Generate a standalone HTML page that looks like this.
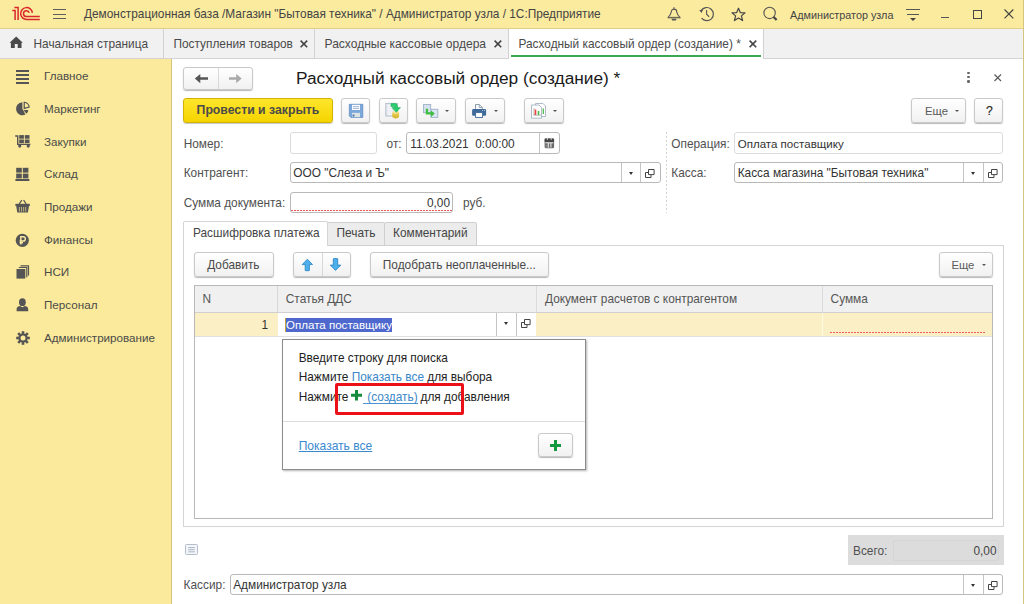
<!DOCTYPE html>
<html><head><meta charset="utf-8">
<style>
*{box-sizing:border-box;margin:0;padding:0}
html,body{width:1024px;height:604px;overflow:hidden;background:#fff;font-family:"Liberation Sans",sans-serif;font-size:11.85px;line-height:14px;color:#333}
.a{position:absolute;white-space:nowrap}
svg{position:absolute;overflow:visible}
#top{position:absolute;left:0;top:0;width:1024px;height:29px;background:#fbeb9f;border-bottom:1px solid #e0cf88}
#tabs{position:absolute;left:0;top:29px;width:1024px;height:30px;background:#f1f1f1;border-bottom:1px solid #d3d3d3}
.tdiv{position:absolute;top:0;width:1px;height:29px;background:#d2d2d2}
#side{position:absolute;left:0;top:59px;width:172px;height:545px;background:#fbea9b;border-right:1px solid #d4c37a}
.si{position:absolute;left:44px;color:#4a4a4a;font-size:11.65px}
#form{position:absolute;left:172px;top:59px;width:852px;height:545px;background:#fff}
.lbl{color:#505050}
.btn{position:absolute;border:1px solid #c9c9c9;border-radius:3px;background:linear-gradient(#fff,#f1f1f1);box-shadow:0 1px 1px rgba(0,0,0,.28)}
.inp{position:absolute;border:1px solid #b9b9b9;border-radius:3px;background:#fff}
.tri{position:absolute;width:0;height:0;border-left:2.4px solid transparent;border-right:2.4px solid transparent;border-top:2.7px solid #555}
.vl{position:absolute;width:1px;background:#c4c4c4}
.tri2{position:absolute;width:0;height:0;border-left:2.6px solid transparent;border-right:2.6px solid transparent;border-top:3px solid #333}
</style></head><body>
<div id="top">
  <svg style="left:0;top:0" width="44" height="28" viewBox="0 0 44 28">
    <path d="M12.3 10.6 H15.1 V20" fill="none" stroke="#d9262b" stroke-width="1.5"/>
    <path d="M14.4 7.6 H18.1 V20" fill="none" stroke="#d9262b" stroke-width="1.5"/>
    <path d="M39.8 19.4 H26.7 A5.9 5.9 0 1 1 32.4 12.8" fill="none" stroke="#d9262b" stroke-width="1.5"/>
    <path d="M39.8 16.5 H26.4 A2.9 2.9 0 1 1 29.2 12.9" fill="none" stroke="#d9262b" stroke-width="1.5"/>
  </svg>
  <div class="a" style="left:52.5px;top:8.7px;width:13.5px;height:1.4px;background:#5e5e5e"></div>
  <div class="a" style="left:52.5px;top:13.5px;width:13.5px;height:1.4px;background:#5e5e5e"></div>
  <div class="a" style="left:52.5px;top:18.1px;width:13.5px;height:1.4px;background:#5e5e5e"></div>
  <div class="a" style="left:84px;top:6.7px;color:#444">Демонстрационная база /Магазин "Бытовая техника" / Администратор узла / 1С:Предприятие</div>
  <!-- bell -->
  <svg style="left:0;top:0" width="1" height="1">
    <path d="M668.2 17.2 C670.2 15.4 670.9 13.5 671.3 11.8 A2.7 2.7 0 0 1 676.7 11.8 C677.1 13.5 677.8 15.4 679.8 17.2" fill="none" stroke="#555" stroke-width="1.1" stroke-linejoin="round"/>
    <path d="M667.6 17.6 H680.6" stroke="#6a6a55" stroke-width="1.5"/>
    <circle cx="674" cy="8" r="0.8" fill="#555"/>
    <path d="M672.4 19.6 H675.6" stroke="#555" stroke-width="1.6" stroke-linecap="round"/>
  </svg>
  <!-- history -->
  <svg style="left:0;top:0" width="1" height="1">
    <path d="M701.2 10.6 A6.6 6.6 0 1 1 701.6 18.2" fill="none" stroke="#555" stroke-width="1.2"/>
    <path d="M699.3 10.2 L703.2 9.2 L701.6 12.9 Z" fill="#555"/>
    <path d="M706.6 10 V14.2 L709.2 16.8" fill="none" stroke="#555" stroke-width="1.1"/>
  </svg>
  <!-- star -->
  <svg style="left:731px;top:6.5px" width="15" height="15" viewBox="0 0 15 15">
    <path d="M7.5 1.2 L9.3 5.6 L14 5.9 L10.4 8.9 L11.6 13.6 L7.5 11 L3.4 13.6 L4.6 8.9 L1 5.9 L5.7 5.6 Z" fill="none" stroke="#444" stroke-width="1.2" stroke-linejoin="round"/>
  </svg>
  <!-- search -->
  <svg style="left:0;top:0" width="1" height="1">
    <circle cx="769.6" cy="12.9" r="5.7" fill="none" stroke="#555" stroke-width="1.1"/>
    <path d="M773.6 17 L776.6 20" stroke="#444" stroke-width="2.3"/>
  </svg>
  <div class="a" style="left:790px;top:7.6px;color:#444;font-size:10.8px">Администратор узла</div>
  <!-- menu -->
  <div class="a" style="left:906px;top:9px;width:14px;height:1.3px;background:#555"></div>
  <div class="a" style="left:907px;top:14px;width:12px;height:1.3px;background:#555"></div>
  <div class="a" style="left:910px;top:18px;width:0;height:0;border-left:3px solid transparent;border-right:3px solid transparent;border-top:3px solid #444"></div>
  <div class="a" style="left:941px;top:17px;width:8px;height:1.3px;background:#555"></div>
  <div class="a" style="left:973px;top:10px;width:8.5px;height:8.5px;border:1.2px solid #444"></div>
  <svg style="left:1004px;top:9px" width="10" height="10" viewBox="0 0 10 10"><path d="M0.5 0.5 L9.3 9.3 M9.3 0.5 L0.5 9.3" stroke="#444" stroke-width="1.2"/></svg>
</div>

<div id="tabs">
  <svg style="left:0;top:-29px" width="1" height="1">
    <path d="M9.6 42.8 L16.2 36.4 L22.8 42.8 H21.5 V47.9 H17.7 V44 H14.8 V47.9 H10.9 V42.8 Z" fill="#4a4a4a"/>
  </svg>
  <div class="a" style="left:33.5px;top:8px;color:#4a4a4a">Начальная страница</div>
  <div class="tdiv" style="left:163px"></div>
  <div class="a" style="left:173.5px;top:8px;color:#4a4a4a">Поступления товаров</div>
  <svg style="left:300px;top:10.5px" width="8" height="8" viewBox="0 0 8 8"><path d="M0.6 0.6 L7.2 7.2 M7.2 0.6 L0.6 7.2" stroke="#444" stroke-width="1.6"/></svg>
  <div class="tdiv" style="left:314px"></div>
  <div class="a" style="left:324.5px;top:8px;color:#4a4a4a;font-size:12.05px">Расходные кассовые ордера</div>
  <svg style="left:494px;top:10.5px" width="8" height="8" viewBox="0 0 8 8"><path d="M0.6 0.6 L7.2 7.2 M7.2 0.6 L0.6 7.2" stroke="#444" stroke-width="1.6"/></svg>
  <div class="tdiv" style="left:508px"></div>
  <div class="a" style="left:509px;top:0;width:254px;height:30px;background:#fff"></div>
  <div class="a" style="left:511px;top:26px;width:250px;height:2px;background:#3aa757"></div>
  <div class="a" style="left:518.5px;top:8px;color:#4a4a4a">Расходный кассовый ордер (создание) *</div>
  <svg style="left:749px;top:10.5px" width="8" height="8" viewBox="0 0 8 8"><path d="M0.6 0.6 L7.2 7.2 M7.2 0.6 L0.6 7.2" stroke="#444" stroke-width="1.6"/></svg>
  <div class="tdiv" style="left:763px"></div>
</div>

<div id="side">
  <!-- Главное -->
  <div class="a" style="left:16px;top:11px;width:13px;height:2px;background:#555"></div>
  <div class="a" style="left:16px;top:15px;width:13px;height:2px;background:#555"></div>
  <div class="a" style="left:16px;top:19px;width:13px;height:2px;background:#555"></div>
  <div class="a" style="left:16px;top:22.8px;width:13px;height:2px;background:#555"></div>
  <div class="si a" style="top:10.4px">Главное</div>
  <!-- Маркетинг pie -->
  <svg style="left:0;top:-59px" width="1" height="1">
    <path d="M22.4 108.8 V102.3 A6.5 6.5 0 1 0 25.4 114.6 Z" fill="#555"/>
    <path d="M23.4 109.9 H28.3 A5 5 0 0 1 26.4 113.8 Z" fill="#555"/>
    <path d="M24.25 108.45 V102.25 A5.55 5.55 0 0 1 29.15 107.15 Z" fill="none" stroke="#555" stroke-width="1.2"/>
  </svg>
  <div class="si a" style="top:43.1px">Маркетинг</div>
  <!-- Закупки cart -->
  <svg style="left:0;top:-59px" width="1" height="1">
    <path d="M15.2 136 H17.7 V144.4 H30.4" fill="none" stroke="#555" stroke-width="1.4"/>
    <rect x="19.2" y="135.1" width="4.7" height="3.6" fill="#555"/>
    <rect x="24.8" y="135.1" width="4.7" height="3.6" fill="#555"/>
    <rect x="19.2" y="139.5" width="4.7" height="3.6" fill="#555"/>
    <rect x="24.8" y="139.5" width="4.7" height="3.6" fill="#555"/>
    <path d="M18.3 145 H21.2 V146.2 A1.45 1.45 0 0 1 18.3 146.2 Z" fill="#555"/>
    <path d="M26.8 145 H29.7 V146.2 A1.45 1.45 0 0 1 26.8 146.2 Z" fill="#555"/>
  </svg>
  <div class="si a" style="top:75.7px">Закупки</div>
  <!-- Склад -->
  <svg style="left:15px;top:108px" width="15" height="14" viewBox="0 0 15 14">
    <rect x="1.2" y="0.8" width="5.6" height="4.8" fill="#555"/>
    <rect x="7.8" y="0.8" width="5.6" height="4.8" fill="#555"/>
    <rect x="1.2" y="6.6" width="5.6" height="4.8" fill="#555"/>
    <rect x="7.8" y="6.6" width="5.6" height="4.8" fill="#555"/>
    <rect x="0.4" y="12" width="14" height="2" fill="#555"/>
  </svg>
  <div class="si a" style="top:108.4px">Склад</div>
  <!-- Продажи basket -->
  <svg style="left:15px;top:140px" width="16" height="16" viewBox="0 0 16 16">
    <path d="M4.2 5 L6.8 1.2 M11.2 5 L8.6 1.2" stroke="#555" stroke-width="1.3" fill="none"/>
    <path d="M0.4 4.8 H14.8 V7 H0.4 Z" fill="#555"/>
    <path d="M1.2 7 H14 L12.9 13.4 H2.3 Z" fill="#555"/>
    <path d="M4.4 8 V12.6 M6.5 8 V12.6 M8.6 8 V12.6 M10.7 8 V12.6" stroke="#c9bc84" stroke-width="0.9"/>
  </svg>
  <div class="si a" style="top:141.1px">Продажи</div>
  <!-- Финансы -->
  <svg style="left:15.4px;top:173.8px" width="15" height="15" viewBox="0 0 15 15">
    <circle cx="7.3" cy="7.3" r="6.6" fill="#555"/>
    <path d="M5.8 11.5 V3.8 H8.2 A2.1 2.1 0 0 1 8.2 8 H4.6 M4.6 9.7 H8" fill="none" stroke="#fbeba2" stroke-width="1.4"/>
  </svg>
  <div class="si a" style="top:173.7px">Финансы</div>
  <!-- НСИ -->
  <svg style="left:16px;top:206px" width="14" height="14" viewBox="0 0 14 14">
    <path d="M4.5 0.8 H12.5 V10.5" fill="none" stroke="#555" stroke-width="1.2"/>
    <path d="M2.8 2.5 H10.8 V12.2" fill="none" stroke="#555" stroke-width="1.2"/>
    <rect x="0.5" y="4" width="8.8" height="9.6" fill="#555"/>
  </svg>
  <div class="si a" style="top:206.4px">НСИ</div>
  <!-- Персонал -->
  <svg style="left:16px;top:239px" width="13" height="14" viewBox="0 0 13 14">
    <ellipse cx="6.4" cy="4.2" rx="3.4" ry="3.9" fill="#555"/>
    <path d="M0.6 13.2 V11 C0.6 9.2 2.5 8.3 4 8.1 L6.4 9.3 L8.8 8.1 C10.3 8.3 12.2 9.2 12.2 11 V13.2 Z" fill="#555"/>
  </svg>
  <div class="si a" style="top:239.1px">Персонал</div>
  <!-- Администрирование gear -->
  <svg style="left:16px;top:272px" width="14" height="14" viewBox="0 0 14 14">
    <g fill="#555" transform="translate(7 7)">
      <circle r="4.6"/>
      <rect x="-1.3" y="-6.8" width="2.6" height="13.6"/>
      <rect x="-1.3" y="-6.8" width="2.6" height="13.6" transform="rotate(45)"/>
      <rect x="-1.3" y="-6.8" width="2.6" height="13.6" transform="rotate(90)"/>
      <rect x="-1.3" y="-6.8" width="2.6" height="13.6" transform="rotate(135)"/>
    </g>
    <circle cx="7" cy="7" r="2.5" fill="#fbea9b"/>
  </svg>
  <div class="si a" style="top:271.7px">Администрирование</div>
</div>

<div id="form"></div>
<!-- nav buttons -->
<div class="btn" style="left:183px;top:67px;width:70px;height:23px"></div>
<div class="vl" style="left:218px;top:68px;height:21px;background:#d8d8d8"></div>
<svg style="left:0;top:0" width="1" height="1"><path d="M194.8 78.5 L200.3 73.9 V77.2 H208 V79.8 H200.3 V83.2 Z" fill="#555"/><path d="M241.7 78.5 L236.2 73.9 V77.2 H229 V79.8 H236.2 V83.2 Z" fill="#a9a9a9"/></svg>

<div class="a" style="left:296px;top:68px;font-size:17.3px;line-height:20px;color:#1a1a1a">Расходный кассовый ордер (создание) *</div>
<!-- kebab / close -->
<div class="a" style="left:967.2px;top:71.5px;width:2.6px;height:2.6px;border-radius:50%;background:#666"></div>
<div class="a" style="left:967.2px;top:75.8px;width:2.6px;height:2.6px;border-radius:50%;background:#666"></div>
<div class="a" style="left:967.2px;top:80px;width:2.6px;height:2.6px;border-radius:50%;background:#666"></div>
<svg style="left:994px;top:74px" width="8" height="8" viewBox="0 0 8 8"><path d="M0.5 0.5 L7 7 M7 0.5 L0.5 7" stroke="#555" stroke-width="1.1"/></svg>

<!-- command bar -->
<div class="a" style="left:183px;top:98px;width:150px;height:25px;border:1px solid #d2b300;border-radius:3px;background:linear-gradient(#ffe62c,#f5d400);box-shadow:0 1px 1px rgba(0,0,0,.22)"></div>
<div class="a" style="left:183px;top:103.4px;width:150px;text-align:center;font-weight:bold;font-size:12.25px;color:#4a4a4a">Провести и закрыть</div>
<div class="btn" style="left:341px;top:98px;width:29px;height:25px"></div>
<div class="btn" style="left:379px;top:98px;width:29px;height:25px"></div>
<div class="btn" style="left:416px;top:98px;width:40px;height:25px"></div>
<div class="btn" style="left:465px;top:98px;width:40px;height:25px"></div>
<div class="btn" style="left:524px;top:98px;width:40px;height:25px"></div>
<div class="btn" style="left:911px;top:98px;width:55px;height:25px"></div>
<div class="a" style="left:925px;top:104.3px;color:#5a5a5a;font-size:11.3px">Еще</div>
<div class="tri" style="left:954.9px;top:110.2px"></div>
<div class="btn" style="left:974px;top:98px;width:29px;height:25px"></div>
<div class="a" style="left:986px;top:103.6px;color:#222;font-size:12.2px;-webkit-text-stroke:0.15px #222">?</div>
<div class="tri" style="left:445.2px;top:109.8px"></div>
<div class="tri" style="left:493.8px;top:109.8px"></div>
<div class="tri" style="left:553.1px;top:109.8px"></div>
<!-- save icon -->
<svg style="left:0;top:0" width="1" height="1">
  <path d="M349.3 104.3 H362.8 V117.4 H350.8 L349.3 115.9 Z" fill="#7ba7db" stroke="#5a86bd" stroke-width="0.7"/>
  <rect x="352" y="104.8" width="8" height="5.2" fill="#fff"/>
  <path d="M352.8 106.6 H359.2 M352.8 108.4 H359.2" stroke="#8aa6c8" stroke-width="0.8"/>
  <rect x="352" y="112.8" width="8" height="4.3" fill="#dde2e5"/>
  <rect x="352.6" y="114.6" width="1.8" height="2" fill="#3f6fb0"/>
</svg>
<!-- post icon -->
<svg style="left:0;top:0" width="1" height="1">
  <rect x="385.8" y="103.3" width="11.8" height="12.7" fill="#e3e8ef" stroke="#a9b5c5" stroke-width="0.8"/>
  <path d="M387.5 105.5 H390 M387.5 107.6 H392 M387.5 109.8 H392 M387.5 112 H392 M387.5 114.2 H392" stroke="#fff" stroke-width="0.9"/>
  <ellipse cx="395.7" cy="115.8" rx="3.4" ry="2.7" fill="#d9b93a"/>
  <rect x="392.3" y="112.6" width="6.8" height="3.2" fill="#e2c64a"/>
  <ellipse cx="395.7" cy="112.6" rx="3.4" ry="1.4" fill="#f4e18a"/>
  <path d="M391 103.5 H395.5 Q397.3 103.5 397.3 106 V107.6 H400.5 L396.3 112.3 L392 107.6 H394.6 V106.6 H391 Z" fill="#26cf6b" stroke="#1aa653" stroke-width="0.5"/>
</svg>
<!-- copy/related icon -->
<svg style="left:0;top:0" width="1" height="1">
  <rect x="423.5" y="104.5" width="7.2" height="8.2" fill="#d6e1ee" stroke="#9fb3c8" stroke-width="0.9"/>
  <rect x="430.8" y="109.3" width="7" height="8.1" fill="#dce6f2" stroke="#9fb3c8" stroke-width="0.9"/>
  <path d="M425.8 108.8 H428.1 V112.3 H431 V110.6 L434.8 113.6 L431 116.9 V114.6 H425.8 Z" fill="#3fbf3f"/>
</svg>
<!-- printer -->
<svg style="left:0;top:0" width="1" height="1">
  <path d="M475.5 109.5 V104.5 H479.3 L482.3 107.5 V109.5" fill="#fff" stroke="#8090a4" stroke-width="0.9"/>
  <path d="M479.3 104.5 V107.5 H482.3" fill="none" stroke="#8090a4" stroke-width="0.8"/>
  <rect x="472.1" y="109.1" width="14" height="6.6" rx="1.3" fill="#3e6a9a"/>
  <rect x="475.6" y="112.6" width="7" height="4.9" fill="#fff" stroke="#3e6a9a" stroke-width="0.9"/>
  <circle cx="482.6" cy="110.5" r="0.5" fill="#cfdbe8"/><circle cx="484.5" cy="110.5" r="0.5" fill="#cfdbe8"/>
</svg>
<!-- report icon -->
<svg style="left:531px;top:103px" width="16" height="16" viewBox="0 0 16 16">
  <path d="M4.5 0.5 H12 L14.5 3 V13.5 H4.5 Z" fill="#fff" stroke="#9aaabb" stroke-width="0.8"/>
  <path d="M0.5 2 H8 L10.5 4.5 V15.2 H0.5 Z" fill="#fff" stroke="#9aaabb" stroke-width="0.8"/>
  <path d="M12.3 5.5 V11" stroke="#4cbb4c" stroke-width="1.3"/>
  <path d="M3 5 V12 M2.5 12.2 H10" stroke="#888" stroke-width="0.6"/>
  <path d="M4.5 6.5 V12" stroke="#ee4444" stroke-width="1.6"/>
  <path d="M7.5 8 V12" stroke="#44bb44" stroke-width="1.6"/>
</svg>


<!-- fields -->
<div class="a lbl" style="left:183.7px;top:136.8px">Номер:</div>
<div class="inp" style="left:290px;top:132px;width:87px;height:22px;border-color:#dcdcdc"></div>
<div class="a lbl" style="left:386.6px;top:136.8px">от:</div>
<div class="inp" style="left:406px;top:132px;width:154px;height:22px"></div>
<div class="vl" style="left:539px;top:133px;height:20px"></div>
<div class="a" style="left:410.2px;top:136.8px;color:#333">11.03.2021&nbsp; 0:00:00</div>
<svg style="left:0;top:0" width="1" height="1">
  <rect x="544.6" y="138.6" width="9.5" height="9.7" rx="1.4" fill="#6b6b6b"/>
  <rect x="544.6" y="138.6" width="9.5" height="3.6" rx="1.2" fill="#444"/>
  <path d="M547.4 137.8 V140 M551.2 137.8 V140" stroke="#ddd" stroke-width="0.9"/>
  <path d="M545.4 142.8 H553.3" stroke="#fff" stroke-width="0.9"/>
  <path d="M548.3 143 V147.6 M550.9 143 V147.6" stroke="#fff" stroke-width="0.9"/>
  <path d="M545.4 145.4 H548 M545.4 147.2 H548" stroke="#aaa" stroke-width="0.6"/>
</svg>
<div class="a lbl" style="left:671.3px;top:136.8px">Операция:</div>
<div class="inp" style="left:734px;top:132px;width:269px;height:22px;border-color:#dcdcdc"></div>
<div class="a" style="left:737.7px;top:136.8px;color:#333;font-size:11.55px">Оплата поставщику</div>
<div class="a" style="left:666px;top:132px;width:1px;height:81px;background:repeating-linear-gradient(180deg,#d3d3d3 0 2px,transparent 2px 4px)"></div>

<div class="a lbl" style="left:183.7px;top:166.2px">Контрагент:</div>
<div class="inp" style="left:290px;top:162px;width:371px;height:21px"></div>
<div class="vl" style="left:621px;top:163px;height:19px"></div>
<div class="vl" style="left:640px;top:163px;height:19px"></div>
<div class="tri2" style="left:628.8px;top:172.1px"></div>
<svg style="left:645px;top:169px" width="10" height="9" viewBox="0 0 10 9"><path d="M3.5 0.5 H9.1 V5.6 H3.5 Z" fill="none" stroke="#444" stroke-width="1"/><path d="M3 3.5 H0.5 V8.5 H6 V6" fill="none" stroke="#444" stroke-width="1"/></svg>
<div class="a" style="left:293.3px;top:166.2px;color:#333">ООО "Слеза и Ъ"</div>

<div class="a lbl" style="left:671.3px;top:166.2px">Касса:</div>
<div class="inp" style="left:734px;top:162px;width:269px;height:21px"></div>
<div class="vl" style="left:963px;top:163px;height:19px"></div>
<div class="vl" style="left:983px;top:163px;height:19px"></div>
<div class="tri2" style="left:970.8px;top:172.1px"></div>
<svg style="left:988px;top:169px" width="10" height="9" viewBox="0 0 10 9"><path d="M3.5 0.5 H9.1 V5.6 H3.5 Z" fill="none" stroke="#444" stroke-width="1"/><path d="M3 3.5 H0.5 V8.5 H6 V6" fill="none" stroke="#444" stroke-width="1"/></svg>
<div class="a" style="left:737.7px;top:166.2px;color:#333">Касса магазина "Бытовая техника"</div>

<div class="a lbl" style="left:183.7px;top:195.8px">Сумма документа:</div>
<div class="inp" style="left:290px;top:192px;width:163px;height:21px"></div>
<div class="a" style="left:292px;top:195.8px;width:158px;text-align:right;color:#333">0,00</div>
<div class="a" style="left:291px;top:210px;width:161px;height:1px;background:repeating-linear-gradient(90deg,#f05a5a 0 2px,transparent 2px 3px)"></div>
<div class="a lbl" style="left:463px;top:195.8px">руб.</div>

<!-- tabs -->
<div class="a" style="left:183px;top:245px;width:821px;height:282px;border:1px solid #d4d4d4"></div>
<div class="a" style="left:327px;top:221.5px;width:57.5px;height:24px;border:1px solid #cfcfcf;background:#ececec;border-radius:2px 2px 0 0"></div>
<div class="a" style="left:384px;top:221.5px;width:93px;height:24px;border:1px solid #cfcfcf;background:#ececec;border-radius:2px 2px 0 0"></div>
<div class="a" style="left:183px;top:221px;width:145px;height:25px;border:1px solid #d4d4d4;border-bottom:none;background:#fff;border-radius:2px 2px 0 0"></div>
<div class="a" style="left:193px;top:226px;color:#444">Расшифровка платежа</div>
<div class="a" style="left:336.5px;top:226px;color:#444">Печать</div>
<div class="a" style="left:393px;top:226px;color:#444">Комментарий</div>

<div class="btn" style="left:194px;top:252px;width:79.5px;height:25px"></div>
<div class="a" style="left:207.2px;top:257.8px;color:#4a4a4a">Добавить</div>
<div class="btn" style="left:293px;top:252px;width:57.5px;height:25px"></div>
<div class="vl" style="left:322px;top:253px;height:23px;background:#d8d8d8"></div>
<svg style="left:0;top:0" width="1" height="1">
<path d="M307.4 259.2 L312.5 264.6 H309.4 V270.2 Q309.4 270.7 308.9 270.7 H305.7 Q305.2 270.7 305.2 270.2 V264.6 H302.2 Z" fill="#4db0ec" stroke="#2180c2" stroke-width="0.8" stroke-linejoin="round"/>
<path d="M335.5 270.4 L340.8 265.1 H337.7 V259.1 Q337.7 258.6 337.2 258.6 H333.8 Q333.3 258.6 333.3 259.1 V265.1 H330.3 Z" fill="#4db0ec" stroke="#2180c2" stroke-width="0.8" stroke-linejoin="round"/>
</svg>
<div class="btn" style="left:370px;top:252px;width:178.5px;height:25px"></div>
<div class="a" style="left:382.8px;top:257.8px;color:#4a4a4a">Подобрать неоплаченные...</div>
<div class="btn" style="left:938.5px;top:252px;width:54px;height:25px"></div>
<div class="a" style="left:951.4px;top:258.1px;color:#5a5a5a;font-size:11.3px">Еще</div>
<div class="tri" style="left:981.5px;top:263.5px"></div>

<!-- table -->
<div class="a" style="left:194px;top:285px;width:799px;height:234px;border:1px solid #b8b8b8;background:#fff"></div>
<div class="a" style="left:195px;top:286px;width:797px;height:27px;background:#f0f0f0;border-bottom:1px solid #d0d0d0"></div>
<div class="vl" style="left:277px;top:286px;height:26px;background:#d8d8d8"></div>
<div class="vl" style="left:536px;top:286px;height:26px;background:#dcdcdc"></div>
<div class="vl" style="left:822px;top:286px;height:26px;background:#dcdcdc"></div>
<div class="a" style="left:202.5px;top:291.7px;color:#555">N</div>
<div class="a" style="left:285.8px;top:291.7px;color:#555">Статья ДДС</div>
<div class="a" style="left:545px;top:291.7px;color:#555">Документ расчетов с контрагентом</div>
<div class="a" style="left:830.6px;top:291.7px;color:#555">Сумма</div>
<div class="a" style="left:195px;top:313px;width:797px;height:23px;background:#fbefc6"></div>
<div class="a" style="left:195px;top:336px;width:797px;height:1px;background:#e0e0e0"></div>
<div class="vl" style="left:822px;top:313px;height:23px;background:#fff8e4"></div>
<div class="a" style="left:200px;top:318.2px;width:68px;text-align:right;color:#333">1</div>
<div class="a" style="left:278px;top:313px;width:258px;height:23px;background:#fff"></div>
<div class="vl" style="left:496px;top:313px;height:23px"></div>
<div class="vl" style="left:516px;top:313px;height:23px"></div>
<div class="tri2" style="left:503.8px;top:322.1px"></div>
<svg style="left:521px;top:319px" width="10" height="9" viewBox="0 0 10 9"><path d="M3.5 0.5 H9.1 V5.6 H3.5 Z" fill="none" stroke="#444" stroke-width="1"/><path d="M3 3.5 H0.5 V8.5 H6 V6" fill="none" stroke="#444" stroke-width="1"/></svg>
<div class="a" style="left:285px;top:317.8px;height:14px;width:107px;background:#4e68cd"></div>
<div class="a" style="left:285px;top:317.8px;height:14px;width:1px;background:#c8a040"></div>
<div class="a" style="left:286px;top:318.2px;color:#fff;font-size:11.55px">Оплата поставщику</div>
<div class="a" style="left:830px;top:332px;width:155px;height:1px;background:repeating-linear-gradient(90deg,#f05a5a 0 2px,transparent 2px 3px)"></div>

<!-- popup -->
<div class="a" style="left:282px;top:339px;width:304px;height:131px;border:1px solid #8c8c8c;background:#fff;box-shadow:1px 1px 2px rgba(0,0,0,.3)"></div>
<div class="a" style="left:283px;top:420.5px;width:302px;height:1px;background:#dedede"></div>
<div class="a" style="left:298.7px;top:350.8px;color:#222">Введите строку для поиска</div>
<div class="a" style="left:298.7px;top:369.8px;color:#222">Нажмите <span style="color:#3a87c8">Показать все</span> для выбора</div>
<div class="a" style="left:298.7px;top:390px;color:#222">Нажмите</div>
<svg style="left:351.2px;top:390.3px" width="11" height="10.4" viewBox="0 0 11 10.4"><path d="M5.5 0 V10.4 M0 5.2 H11" stroke="#138c3c" stroke-width="3"/></svg>
<div class="a" style="left:363.1px;top:402.5px;width:54.5px;height:1px;background:#4a93d0"></div>
<div class="a" style="left:367.2px;top:390px;color:#3a87c8">(создать)</div>
<div class="a" style="left:420.5px;top:390px;color:#222">для добавления</div>
<div class="a" style="left:298.7px;top:439px;color:#3a8ad0;text-decoration:underline;font-size:12.05px">Показать все</div>
<div class="btn" style="left:538px;top:433px;width:35px;height:23.5px"></div>
<svg style="left:550px;top:439.6px" width="11" height="11" viewBox="0 0 11 11"><path d="M5.5 0 V11 M0 5.5 H11" stroke="#15993f" stroke-width="3"/></svg>
<div class="a" style="left:335px;top:383px;width:129px;height:31.5px;border:3px solid #ec1118;border-radius:2px"></div>

<!-- bottom -->
<svg style="left:185px;top:544px" width="13" height="11" viewBox="0 0 13 11"><rect x="0.5" y="0.5" width="12" height="10" rx="1" fill="#f4f6f9" stroke="#aab8c8" stroke-width="0.9"/><path d="M3.2 3.6 H9.8 M3.2 5.7 H9.8 M3.2 7.8 H9.8" stroke="#98a6b5" stroke-width="0.8"/></svg>
<div class="a" style="left:848px;top:535px;width:155.5px;height:30px;background:#dcdcdc"></div>
<div class="a" style="left:893px;top:540px;width:106px;height:21px;border:1px solid #d4d4d4;border-radius:2px"></div>
<div class="a" style="left:853px;top:543.7px;color:#505050">Всего:</div>
<div class="a" style="left:896px;top:543.7px;width:100.5px;text-align:right;color:#444">0,00</div>

<div class="a lbl" style="left:183.6px;top:577.7px">Кассир:</div>
<div class="inp" style="left:230px;top:574px;width:773px;height:21px"></div>
<div class="vl" style="left:963px;top:575px;height:19px"></div>
<div class="vl" style="left:983px;top:575px;height:19px"></div>
<div class="tri2" style="left:970.8px;top:584.1px"></div>
<svg style="left:988px;top:581px" width="10" height="9" viewBox="0 0 10 9"><path d="M3.5 0.5 H9.1 V5.6 H3.5 Z" fill="none" stroke="#444" stroke-width="1"/><path d="M3 3.5 H0.5 V8.5 H6 V6" fill="none" stroke="#444" stroke-width="1"/></svg>
<div class="a" style="left:233.2px;top:577.7px;color:#333">Администратор узла</div>
<div class="a" style="left:1023px;top:0;width:1px;height:604px;background:#d6c57c"></div>
</body></html>
